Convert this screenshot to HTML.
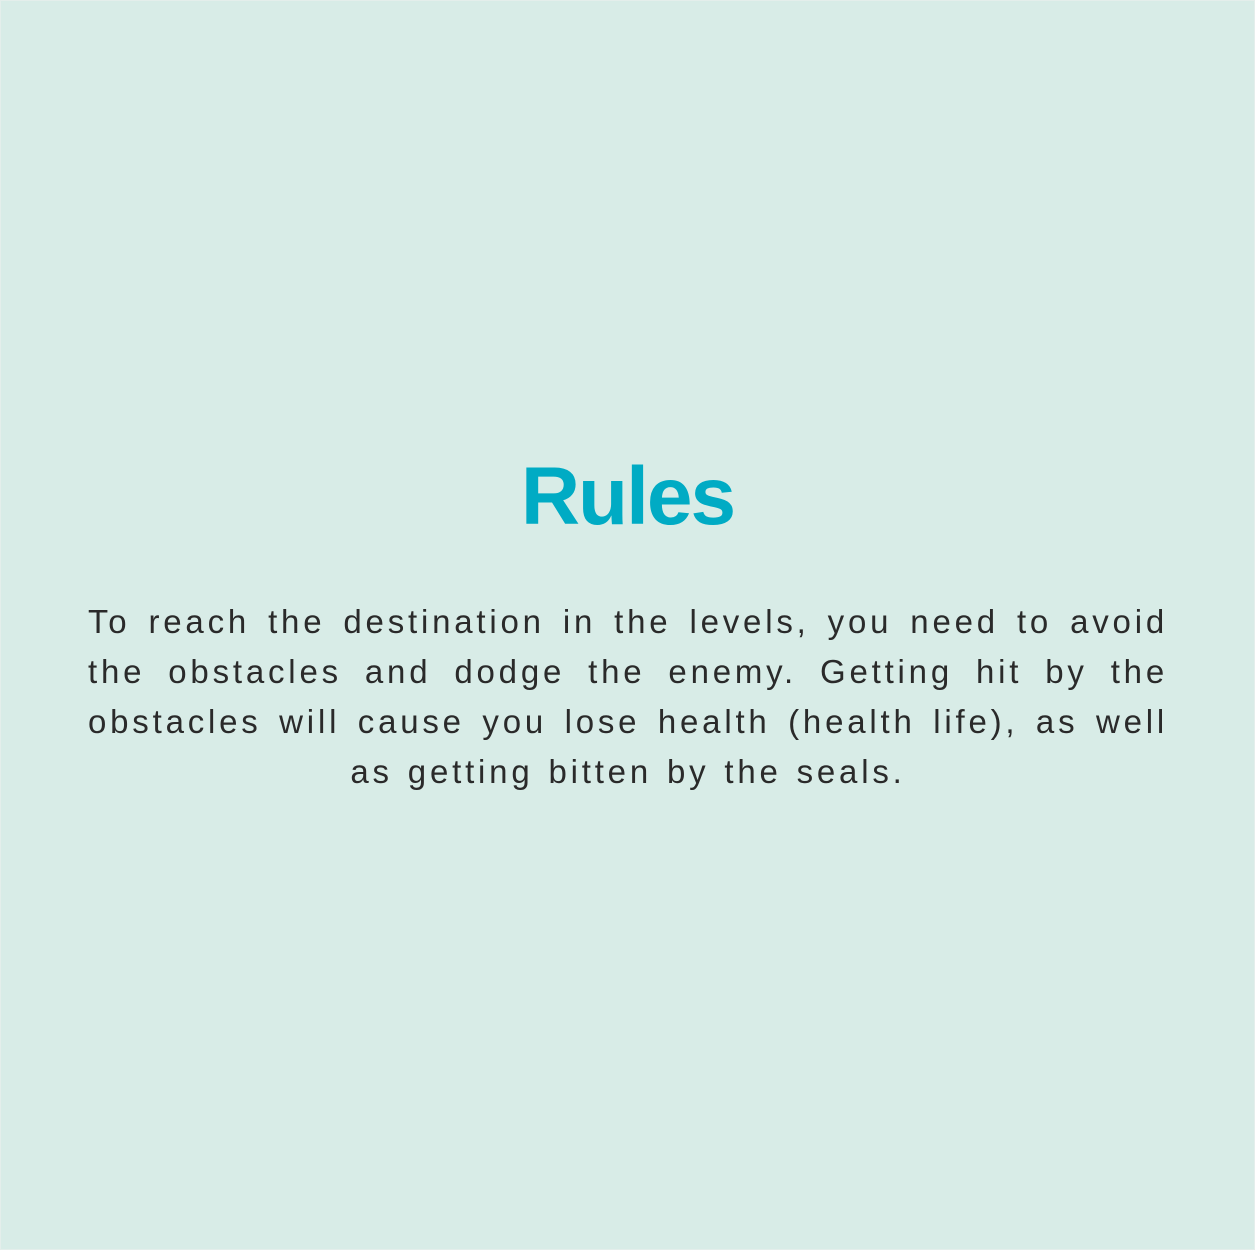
<!DOCTYPE html>
<html><head><style>
html,body{margin:0;padding:0;}
body{width:1255px;height:1250px;background:#d8ece7;position:relative;overflow:hidden;font-family:"Liberation Sans",sans-serif;}
.frame{position:absolute;inset:0;border:1px solid #e4eeeb;box-sizing:border-box;}
h1{position:absolute;left:0;width:1255px;top:442px;margin:0;text-align:center;color:#00abc4;font-size:82px;font-weight:bold;letter-spacing:-2px;line-height:110px;}
.t{position:absolute;left:88px;width:1080px;top:597px;color:#2a2a2a;font-size:33px;letter-spacing:3.8px;word-spacing:2px;}
.t div{height:50px;line-height:50px;text-align:justify;text-align-last:justify;white-space:nowrap;}
.t div.c{text-align:center;text-align-last:center;}
</style></head><body><div class="frame"></div>
<h1>Rules</h1>
<div class="t">
<div>To reach the destination in the levels, you need to avoid</div>
<div>the obstacles and dodge the enemy. Getting hit by the</div>
<div>obstacles will cause you lose health (health life), as well</div>
<div class="c">as getting bitten by the seals.</div>
</div>
</body></html>
